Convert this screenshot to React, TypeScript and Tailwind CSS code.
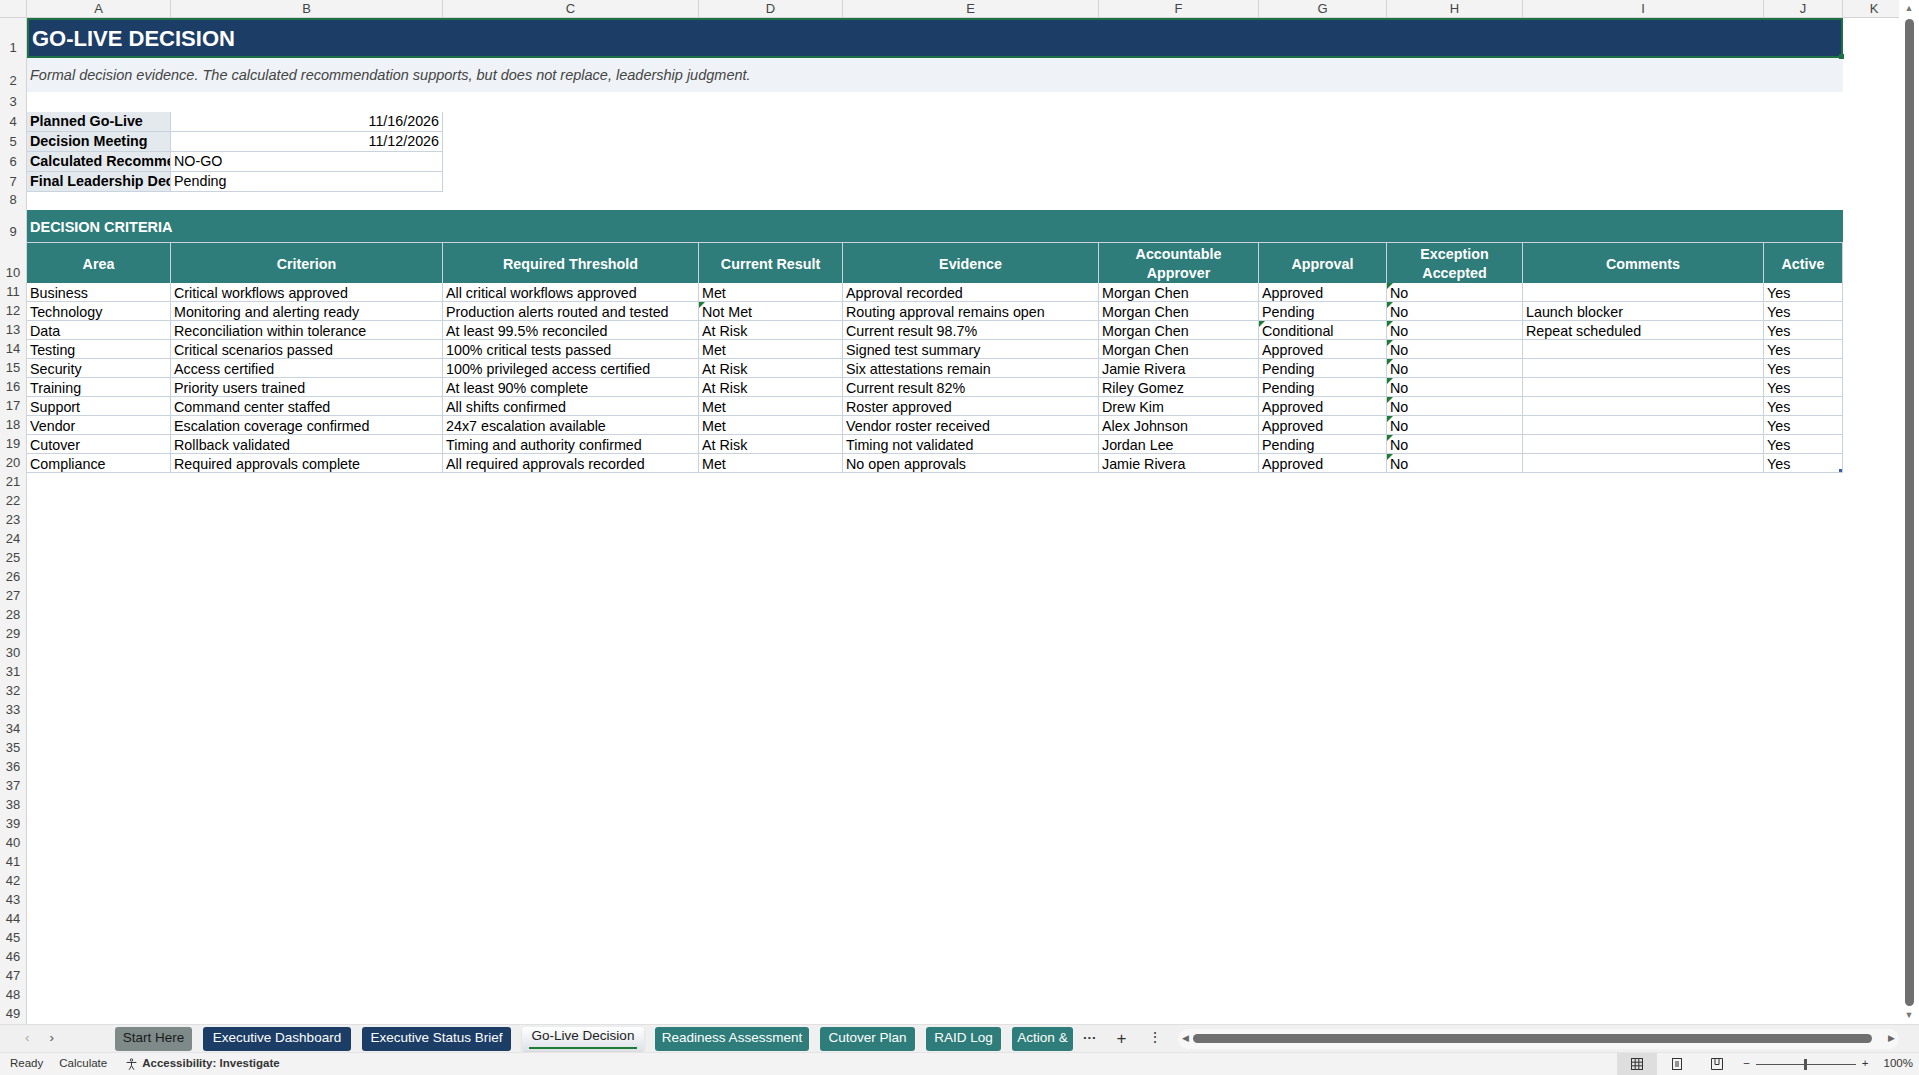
import React from "react";

const COLS = [144, 272, 256, 144, 256, 160, 128, 136, 241, 79, 63];
const LETTERS = ["A", "B", "C", "D", "E", "F", "G", "H", "I", "J", "K"];

const criteria = [
  ["Business", "Critical workflows approved", "All critical workflows approved", "Met", "Approval recorded", "Morgan Chen", "Approved", "No", "", "Yes"],
  ["Technology", "Monitoring and alerting ready", "Production alerts routed and tested", "Not Met", "Routing approval remains open", "Morgan Chen", "Pending", "No", "Launch blocker", "Yes"],
  ["Data", "Reconciliation within tolerance", "At least 99.5% reconciled", "At Risk", "Current result 98.7%", "Morgan Chen", "Conditional", "No", "Repeat scheduled", "Yes"],
  ["Testing", "Critical scenarios passed", "100% critical tests passed", "Met", "Signed test summary", "Morgan Chen", "Approved", "No", "", "Yes"],
  ["Security", "Access certified", "100% privileged access certified", "At Risk", "Six attestations remain", "Jamie Rivera", "Pending", "No", "", "Yes"],
  ["Training", "Priority users trained", "At least 90% complete", "At Risk", "Current result 82%", "Riley Gomez", "Pending", "No", "", "Yes"],
  ["Support", "Command center staffed", "All shifts confirmed", "Met", "Roster approved", "Drew Kim", "Approved", "No", "", "Yes"],
  ["Vendor", "Escalation coverage confirmed", "24x7 escalation available", "Met", "Vendor roster received", "Alex Johnson", "Approved", "No", "", "Yes"],
  ["Cutover", "Rollback validated", "Timing and authority confirmed", "At Risk", "Timing not validated", "Jordan Lee", "Pending", "No", "", "Yes"],
  ["Compliance", "Required approvals complete", "All required approvals recorded", "Met", "No open approvals", "Jamie Rivera", "Approved", "No", "", "Yes"],
];

const headers = ["Area", "Criterion", "Required Threshold", "Current Result", "Evidence", "Accountable Approver", "Approval", "Exception Accepted", "Comments", "Active"];

const Tri = () => (
  <span className="absolute left-0 top-0 w-0 h-0 border-t-[6px] border-r-[6px] border-t-[#1e7b34] border-r-transparent" />
);

function Row({ n, h, children }: { n: number; h: number; children?: React.ReactNode }) {
  return (
    <div className="flex" style={{ height: h }}>
      <div className="w-[27px] shrink-0 flex items-end justify-center text-[13px] text-[#444] bg-[#f3f3f3] border-r border-[#d4d4d4] pb-[1px]">{n}</div>
      <div className="flex flex-1 min-w-0">{children}</div>
    </div>
  );
}

const tabs = [
  { t: "Start Here", c: "bg-[#7e8a88] text-[#1a1a1a]", w: 77 },
  { t: "Executive Dashboard", c: "bg-[#1b3d66] text-white", w: 148 },
  { t: "Executive Status Brief", c: "bg-[#1b3d66] text-white", w: 149 },
  { t: "Go-Live Decision", c: "active", w: 122 },
  { t: "Readiness Assessment", c: "bg-[#2e7d7a] text-white", w: 154 },
  { t: "Cutover Plan", c: "bg-[#2e7d7a] text-white", w: 95 },
  { t: "RAID Log", c: "bg-[#2e7d7a] text-white", w: 75 },
  { t: "Action &", c: "bg-[#2e7d7a] text-white", w: 61 },
];

export default function App() {
  const empty = Array.from({ length: 29 }, (_, i) => i + 21);
  return (
    <div className="w-[1919px] h-[1075px] overflow-hidden bg-white flex flex-col text-[14.3px] text-black" style={{ fontFamily: '"Liberation Sans", Arial, sans-serif' }}>
      <div className="flex flex-1 min-h-0">
        <div className="flex-1 min-w-0 flex flex-col overflow-hidden">
          {/* column headers */}
          <div className="flex h-[18px] shrink-0 bg-[#f3f3f3] border-b border-[#d4d4d4] text-[13px] text-[#444]">
            <div className="w-[27px] shrink-0 border-r border-[#d4d4d4]" />
            {COLS.map((w, i) => (
              <div key={i} style={{ width: w }} className="shrink-0 border-r border-[#d4d4d4] flex items-center justify-center">{LETTERS[i]}</div>
            ))}
          </div>
          <Row n={1} h={42}>
            <div className="w-[1816px] bg-[#1b3d66] border-2 border-[#1e7145] flex items-center px-[3px] text-white font-bold text-[22px] relative">
              GO-LIVE DECISION
              <span className="absolute -right-[3px] -bottom-[3px] w-[5px] h-[5px] bg-[#1e7145]" />
            </div>
          </Row>
          <Row n={2} h={35}>
            <div className="w-[1816px] bg-[#eff3f7] flex items-center px-[3px] pt-[2px] italic text-[#444] text-[14.5px]">
              Formal decision evidence. The calculated recommendation supports, but does not replace, leadership judgment.
            </div>
          </Row>
          <Row n={3} h={21} />
          {[
            ["Planned Go-Live", "11/16/2026", true],
            ["Decision Meeting", "11/12/2026", true],
            ["Calculated Recommendation", "NO-GO", false],
            ["Final Leadership Decision", "Pending", false],
          ].map(([l, v, r], i) => (
            <Row key={i} n={4 + i} h={20}>
              <div className="w-[144px] bg-[#e4e9ee] border-b border-r border-[#c9d3dd] font-bold px-[3px] flex items-center overflow-hidden whitespace-nowrap">{l as string}</div>
              <div className={`w-[272px] border-b border-r border-[#c9d3dd] px-[3px] flex items-center ${r ? "justify-end" : ""}`}>{v as string}</div>
            </Row>
          ))}
          <Row n={8} h={18} />
          <Row n={9} h={33}>
            <div className="w-[1816px] bg-[#2e7d7a] text-white font-bold flex items-center px-[3px] text-[14.5px] pt-[4px]">DECISION CRITERIA</div>
          </Row>
          <Row n={10} h={41}>
            {headers.map((h, i) => (
              <div key={i} style={{ width: COLS[i] }} className="shrink-0 bg-[#2e7d7a] text-white font-bold border-r border-t border-[#c9d3dd] flex items-center justify-center text-center leading-[19px] px-2 pt-[2px]">{h}</div>
            ))}
          </Row>
          {criteria.map((r, ri) => (
            <Row key={ri} n={11 + ri} h={19}>
              {r.map((c, i) => (
                <div key={i} style={{ width: COLS[i] }} className="shrink-0 relative border-r border-b border-[#c9d3dd] px-[3px] pt-[2px] flex items-center whitespace-nowrap overflow-hidden leading-none">
                  {(i === 7 || (ri === 1 && i === 3) || (ri === 2 && i === 6)) && <Tri />}
                  {c}
                  {ri === 9 && i === 9 && <span className="absolute right-0 bottom-0 w-[3px] h-[3px] bg-[#3a5fb0]" />}
                </div>
              ))}
            </Row>
          ))}
          {empty.map((n) => (
            <Row key={n} n={n} h={19} />
          ))}
        </div>
        {/* vertical scrollbar */}
        <div className="w-[20px] shrink-0 bg-white flex flex-col items-center py-[2px]">
          <span className="text-[9px] text-[#777]">▲</span>
          <div className="w-[9px] flex-1 bg-[#6f6f6f] rounded-full my-[3px]" />
          <span className="text-[9px] text-[#777]">▼</span>
        </div>
      </div>
      {/* sheet tabs */}
      <div className="h-[28px] shrink-0 bg-[#f0f0f0] border-t border-[#e0e0e0] flex items-center text-[13.5px]">
        <span className="w-[60px] pl-[25px] text-[#aaa] flex gap-[20px]"><span>‹</span><span className="text-[#555]">›</span></span>
        <div className="ml-[55px] flex gap-[11px] h-[24px]">
          {tabs.map((t) =>
            t.c === "active" ? (
              <div key={t.t} style={{ width: t.w }} className="shrink-0 bg-gradient-to-b from-white to-[#dde2e8] rounded-[3px] flex flex-col items-center justify-center text-[#222] shadow-sm">
                <span className="-mt-[2px]">{t.t}</span>
                <span className="w-[108px] h-[2px] bg-[#1e7b34] mt-[1px]" />
              </div>
            ) : (
              <div key={t.t} style={{ width: t.w }} className={`shrink-0 rounded-[3px] flex items-center justify-center overflow-hidden whitespace-nowrap ${t.c}`}>{t.t}</div>
            )
          )}
        </div>
        <span className="ml-[10px] text-[#333] font-bold">···</span>
        <span className="ml-[20px] text-[#333] text-[17px]">+</span>
        <span className="ml-[22px] text-[#333]">⋮</span>
        <div className="ml-[16px] flex-1 mr-[20px] h-[20px] bg-[#f7f7f7] rounded-full flex items-center px-[4px] gap-[4px]">
          <span className="text-[9px] text-[#666]">◀</span>
          <div className="flex-1 h-[9px] bg-[#6f6f6f] rounded-full" />
          <span className="text-[9px] text-[#666] ml-[12px]">▶</span>
        </div>
      </div>
      {/* status bar */}
      <div className="h-[23px] shrink-0 bg-[#f3f3f3] border-t border-[#e4e4e4] flex items-center text-[11.5px] text-[#333]">
        <span className="ml-[10px]">Ready</span>
        <span className="ml-[16px]">Calculate</span>
        <span className="ml-[18px] flex items-center gap-1 font-semibold">
          <svg width="13" height="13" viewBox="0 0 16 16" fill="none" stroke="#333" strokeWidth="1.2"><circle cx="8" cy="2.5" r="1.5" /><path d="M2 5.5h12M8 5.5v4l-3 5M8 9.5l3 5" /></svg>
          Accessibility: Investigate
        </span>
        <div className="ml-auto flex items-center h-full">
          <div className="w-[40px] h-full bg-[#dedede] flex items-center justify-center">
            <svg width="14" height="14" viewBox="0 0 14 14" fill="none" stroke="#333"><rect x="1.5" y="1.5" width="11" height="11" /><path d="M1.5 5.2h11M1.5 8.8h11M5.2 1.5v11M8.8 1.5v11" /></svg>
          </div>
          <div className="w-[40px] flex justify-center">
            <svg width="12" height="14" viewBox="0 0 12 14" fill="none" stroke="#333"><rect x="1.5" y="1.5" width="9" height="11" /><path d="M4 5h4M4 7h4M4 9h4" /></svg>
          </div>
          <div className="w-[40px] flex justify-center">
            <svg width="14" height="14" viewBox="0 0 14 14" fill="none" stroke="#333"><path d="M1.5 1.5h11v11h-11zM5 1.5v6h4v-6" /></svg>
          </div>
          <span className="ml-[6px]">−</span>
          <div className="relative w-[100px] h-[1px] bg-[#555] mx-[6px]">
            <span className="absolute left-[48px] -top-[5px] w-[3px] h-[11px] bg-[#555]" />
          </div>
          <span>+</span>
          <span className="ml-[15px] mr-[6px]">100%</span>
        </div>
      </div>
    </div>
  );
}
